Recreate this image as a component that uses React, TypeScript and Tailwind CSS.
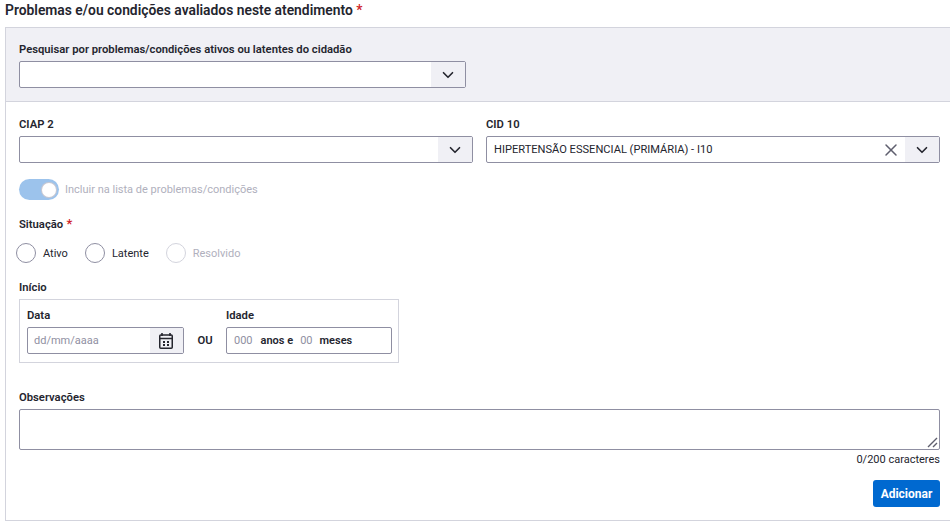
import { ChevronDown, X } from "lucide-react";

const Label = ({ text, required }: { text: string; required?: boolean }) => (
  <div className="h-[18px] pt-[1px] text-[11.25px] leading-[18px] font-semibold text-[#24252e]">
    {text}
    {required && <span className="text-[13px] text-[#d01e29]"> *</span>}
  </div>
);

const Select = ({ value, clear }: { value?: string; clear?: boolean }) => (
  <div className="flex h-[27px] w-full items-stretch rounded-[2px] border border-[#8f8fa2] bg-white">
    <div className="flex flex-1 items-center pt-[1px] pl-[7px] text-[11.1px] text-[#24252e]">{value}</div>
    {clear && (
      <div className="flex w-[28px] items-center justify-center">
        <X size={20} strokeWidth={1.8} className="text-[#5f5f6e]" />
      </div>
    )}
    <div className="flex w-[34px] items-center justify-center bg-[#f0f0f5]">
      <ChevronDown size={18} strokeWidth={2.2} className="text-[#24252e]" />
    </div>
  </div>
);

const Radio = ({ text, disabled }: { text: string; disabled?: boolean }) => (
  <div className="flex items-center gap-[7px]">
    <div
      className={
        disabled
          ? "h-5 w-5 rounded-full border border-[#d3d4dd] bg-white"
          : "h-5 w-5 rounded-full border border-[#8f8fa2] bg-white"
      }
    />
    <span className={disabled ? "pt-[2px] text-[11px] text-[#b0b0bd]" : "pt-[2px] text-[11px] text-[#24252e]"}>{text}</span>
  </div>
);

export default function App() {
  return (
    <div className="h-[524px] w-[950px] overflow-hidden bg-white font-['Roboto',sans-serif]">
      <div className="flex h-[27px] items-start pt-[1px] pl-[5px]">
        <h2 className="text-[13.85px] leading-[18px] font-semibold text-[#24252e]">
          Problemas e/ou condições avaliados neste atendimento <span className="text-[#d01e29]">*</span>
        </h2>
      </div>
      <div className="ml-[5px] h-[494px] border-t border-b border-l border-[#d3d4dd]">
        <div className="h-[74px] border-b border-[#d3d4dd] bg-[#f0f0f5] pt-[12px] pl-[13px]">
          <Label text="Pesquisar por problemas/condições ativos ou latentes do cidadão" />
          <div className="mt-[3px] w-[447px]">
            <Select />
          </div>
        </div>
        <div className="pt-[13px] pr-[10px] pl-[13px]">
          <div className="grid grid-cols-2 gap-[13px]">
            <div>
              <Label text="CIAP 2" />
              <div className="mt-[3px]">
                <Select />
              </div>
            </div>
            <div>
              <Label text="CID 10" />
              <div className="mt-[3px]">
                <Select value="HIPERTENSÃO ESSENCIAL (PRIMÁRIA) - I10" clear />
              </div>
            </div>
          </div>
          <div className="mt-[16px] flex h-[21px] items-center gap-[6px]">
            <div className="flex h-[21px] w-[40px] items-center justify-end rounded-full bg-[#9cc3ec] pr-[3px]">
              <div className="h-[14px] w-[14px] rounded-full bg-white shadow-[0_0_0_1px_#c8c8d2]" />
            </div>
            <span className="pt-[1px] text-[11px] text-[#b0b0bd]">Incluir na lista de problemas/condições</span>
          </div>
          <div className="mt-[14px]">
            <Label text="Situação" required />
          </div>
          <div className="mt-[11px] -ml-[3px] flex h-[20px] items-center gap-[17px]">
            <Radio text="Ativo" />
            <Radio text="Latente" />
            <Radio text="Resolvido" disabled />
          </div>
          <div className="mt-[15px]">
            <Label text="Início" />
          </div>
          <div className="mt-[3px] flex h-[64px] w-[380px] items-start border border-[#d3d4dd] pt-[6px] pr-[6px] pl-[7px]">
            <div className="w-[157px]">
              <Label text="Data" />
              <div className="mt-[3px] flex h-[27px] items-stretch rounded-[2px] border border-[#8f8fa2] bg-white">
                <div className="flex flex-1 items-center pt-[1px] pl-[6px] text-[11px] text-[#8f8fa2]">dd/mm/aaaa</div>
                <div className="flex w-[33px] items-center justify-center bg-[#f0f0f5] pr-[1px]">
                  <svg width="16" height="18" viewBox="0 0 16 18" className="text-[#24252e]">
                    <path d="M4 1v3M12 1v3" stroke="currentColor" strokeWidth="1.6" />
                    <rect x="1.75" y="3" width="12.5" height="13.25" rx="1" fill="none" stroke="currentColor" strokeWidth="1.5" />
                    <path d="M2 6.5h12" stroke="currentColor" strokeWidth="1.5" />
                    <path d="M5 9h2v2H5zM9 9h2v2H9zM5 12h2v2H5zM9 12h2v2H9z" fill="currentColor" />
                  </svg>
                </div>
              </div>
            </div>
            <div className="flex h-[48px] w-[42px] items-end justify-center pb-[4px] text-[11.25px] font-semibold text-[#24252e]">OU</div>
            <div className="w-[166px]">
              <Label text="Idade" />
              <div className="mt-[3px] flex h-[27px] items-center rounded-[2px] border border-[#8f8fa2] bg-white pt-[1px] pl-[7px] text-[11px]">
                <span className="text-[#8f8fa2]">000</span>
                <span className="ml-[8px] font-semibold text-[#24252e]">anos e</span>
                <span className="ml-[7px] text-[#8f8fa2]">00</span>
                <span className="ml-[7px] font-semibold text-[#24252e]">meses</span>
              </div>
            </div>
          </div>
          <div className="mt-[25px]">
            <Label text="Observações" />
          </div>
          <div className="relative mt-[3px] h-[41px] rounded-[2px] border border-[#8f8fa2] bg-white">
            <svg className="absolute right-[1px] bottom-[1px]" width="11" height="11" viewBox="0 0 11 11">
              <path d="M1 10 L10 1 M6 10 L10 6" stroke="#5f5f6e" strokeWidth="1.4" />
            </svg>
          </div>
          <div className="mt-[3px] h-[14px] text-right text-[11px] leading-[14px] text-[#24252e]">0/200 caracteres</div>
          <div className="mt-[13px] flex justify-end">
            <button className="h-[27px] w-[67px] rounded-[3px] bg-[#0069d0] text-[12px] font-bold text-white">Adicionar</button>
          </div>
        </div>
      </div>
    </div>
  );
}
